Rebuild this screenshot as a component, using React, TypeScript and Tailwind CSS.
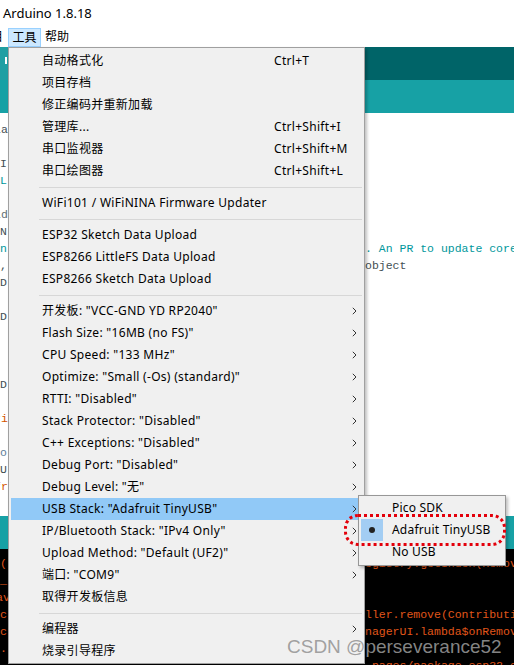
import React from "react";

type Item =
  | { kind: "sep" }
  | { kind: "item"; t: string; s?: string; arrow?: boolean; active?: boolean };

const I = (t: string, s?: string, arrow?: boolean, active?: boolean): Item => ({ kind: "item", t, s, arrow, active });
const SEP: Item = { kind: "sep" };

const items: Item[] = [
  I("自动格式化", "Ctrl+T"),
  I("项目存档"),
  I("修正编码并重新加载"),
  I("管理库...", "Ctrl+Shift+I"),
  I("串口监视器", "Ctrl+Shift+M"),
  I("串口绘图器", "Ctrl+Shift+L"),
  SEP,
  I("WiFi101 / WiFiNINA Firmware Updater"),
  SEP,
  I("ESP32 Sketch Data Upload"),
  I("ESP8266 LittleFS Data Upload"),
  I("ESP8266 Sketch Data Upload"),
  SEP,
  I('开发板: "VCC-GND YD RP2040"', undefined, true),
  I('Flash Size: "16MB (no FS)"', undefined, true),
  I('CPU Speed: "133 MHz"', undefined, true),
  I('Optimize: "Small (-Os) (standard)"', undefined, true),
  I('RTTI: "Disabled"', undefined, true),
  I('Stack Protector: "Disabled"', undefined, true),
  I('C++ Exceptions: "Disabled"', undefined, true),
  I('Debug Port: "Disabled"', undefined, true),
  I('Debug Level: "无"', undefined, true),
  I('USB Stack: "Adafruit TinyUSB"', undefined, true, true),
  I('IP/Bluetooth Stack: "IPv4 Only"', undefined, true),
  I('Upload Method: "Default (UF2)"', undefined, true),
  I('端口: "COM9"', undefined, true),
  I("取得开发板信息"),
  SEP,
  I("编程器", undefined, true),
  I("烧录引导程序"),
];

type Line = { l?: string; lc?: string; off?: boolean; r?: string; rc?: string };
const DARK = "#434f54";
const TEAL = "#00979c";
const ORANGE = "#d35400";

const editorLines: Line[] = [
  { l: "la", lc: DARK, off: true },
  {},
  { l: "I", lc: DARK },
  { l: "L", lc: TEAL },
  {},
  { l: "ld", lc: "#5e6d73", off: true },
  { l: "N", lc: DARK },
  { l: "n", lc: TEAL, r: ". An PR to update core", rc: TEAL },
  { l: ",", lc: DARK, r: "object", rc: DARK },
  { l: "D", lc: DARK },
  {},
  { l: "D", lc: DARK },
  {},
  {},
  {},
  { l: "D", lc: DARK },
  {},
  { l: "ri", lc: ORANGE, off: true },
  {},
  { l: "o", lc: "#5e7e9a" },
  { l: "U", lc: DARK },
  { l: "fr", lc: ORANGE, off: true },
];

const CON = "#e0561a";
const consoleLines: Line[] = [
  { l: "(", r: "egistry.getIndex(Remov" },
  { l: "_", r: "" },
  { l: "av", off: true, r: "" },
  { l: "c", r: "ller.remove(Contributi" },
  { l: "c", r: "nagerUI.lambda$onRemov" },
  { l: ".", r: "" },
  { l: "", r: "_pages/package_esp32_e" },
];

function Chevron() {
  return (
    <svg width="5" height="8" viewBox="0 0 5 8" className="block">
      <path d="M0.8 0.8 L4 4 L0.8 7.2" fill="none" stroke="#333" strokeWidth="1" />
    </svg>
  );
}

export default function App() {
  const ui = { fontFamily: '"Noto Sans","Noto Sans CJK SC",sans-serif' };
  const mono = { fontFamily: '"Liberation Mono","Courier New",monospace' };
  return (
    <div className="relative w-[514px] h-[665px] overflow-hidden bg-white" style={ui}>
      {/* title bar */}
      <div className="h-[27px] flex items-center pl-[3px] text-[13px] text-black">Arduino 1.8.18</div>
      {/* menu bar */}
      <div className="h-[20px] flex items-stretch text-[12px] text-black">
        <div className="w-[8px] overflow-hidden flex items-center">
          <span className="ml-[-9px]">目</span>
        </div>
        <div className="mt-[1px] w-[33px] flex items-center justify-center bg-[#cce8ff] border border-[#99d1ff]">工具</div>
        <div className="ml-[4px] flex items-center">帮助</div>
      </div>
      {/* toolbar */}
      <div className="h-[33px] bg-[#006468] flex">
        <div className="w-[8px] h-full bg-[#1f9fa3] flex items-start">
          <div className="mt-[10px] ml-[5px] w-[2px] h-[7px] bg-white" />
        </div>
      </div>
      {/* tab bar */}
      <div className="h-[33px] bg-[#17a1a5]" />
      {/* editor */}
      <div className="h-[403px] bg-white pt-[8px] text-[11.5px] overflow-hidden" style={mono}>
        {editorLines.map((ln, i) => (
          <div key={i} className="h-[17px] flex items-center whitespace-pre">
            <span className="w-[365px] shrink-0 overflow-hidden">
              <span className={ln.off ? "ml-[-6px] inline-block" : "inline-block"} style={{ color: ln.lc }}>
                {ln.l ?? ""}
              </span>
            </span>
            <span style={{ color: ln.rc }}>{ln.r ?? ""}</span>
          </div>
        ))}
      </div>
      {/* status bar */}
      <div className="h-[33px] bg-[#17a1a5]" />
      {/* console */}
      <div className="h-[116px] bg-black pt-[6px] text-[11.5px] overflow-hidden" style={{ ...mono, color: CON }}>
        {consoleLines.map((ln, i) => (
          <div key={i} className="h-[17px] flex items-center whitespace-pre">
            <span className="w-[365px] shrink-0 overflow-hidden">
              <span className={ln.off ? "ml-[-4px] inline-block" : "inline-block"}>{ln.l}</span>
            </span>
            <span>{ln.r}</span>
          </div>
        ))}
      </div>

      {/* Tools menu */}
      <div className="absolute left-[8px] top-[47px] w-[357px] h-[617px] bg-[#f0f0f0] border border-[#a0a0a0] shadow-[2px_2px_3px_rgba(0,0,0,0.25)] px-[2px] pt-[2px] text-[12px] tracking-[0.3px] text-black">
        {items.map((it, i) =>
          it.kind === "sep" ? (
            <div key={i} className="h-[10px] flex items-center pl-[28px]">
              <div className="h-px w-full bg-[#d7d7d7]" />
            </div>
          ) : (
            <div
              key={i}
              className={`h-[22px] flex items-center relative ${it.active ? "bg-[#91c9f7]" : ""}`}
            >
              <span className="pl-[31px] w-[263px] shrink-0 whitespace-nowrap">{it.t}</span>
              <span className="whitespace-nowrap flex-1">{it.s ?? ""}</span>
              <span className="w-[10px] flex items-center">{it.arrow ? <Chevron /> : null}</span>
            </div>
          )
        )}
      </div>

      {/* USB Stack submenu */}
      <div className="absolute left-[358px] top-[495px] w-[148px] h-[71px] bg-[#f0f0f0] border border-[#979797] shadow-[2px_2px_3px_rgba(0,0,0,0.25)] pt-[1px] px-[2px] text-[12px] tracking-[0.2px] text-black">
        <div className="h-[22px] flex items-center">
          <span className="w-[22px]" />
          <span className="ml-[9px]">Pico SDK</span>
        </div>
        <div className="h-[22px] flex items-center">
          <span className="w-[22px] h-[22px] bg-[#a3cdf3] flex items-center justify-center">
            <span className="w-[6px] h-[6px] rounded-full bg-[#222]" />
          </span>
          <span className="ml-[9px]">Adafruit TinyUSB</span>
        </div>
        <div className="h-[22px] flex items-center">
          <span className="w-[22px]" />
          <span className="ml-[9px]">No USB</span>
        </div>
      </div>

      {/* red dotted highlight */}
      <div className="absolute left-[344px] top-[514px] w-[162px] h-[32px] rounded-[14px] border-[3px] border-dotted border-[#e3000b]" />

      {/* watermark */}
      <div
        className="absolute left-[287px] top-[633px] text-[19px] text-[rgba(150,150,150,0.9)] whitespace-nowrap"
        style={{ fontFamily: '"Liberation Sans",Arial,sans-serif' }}
      >
        CSDN @perseverance52
      </div>
    </div>
  );
}
